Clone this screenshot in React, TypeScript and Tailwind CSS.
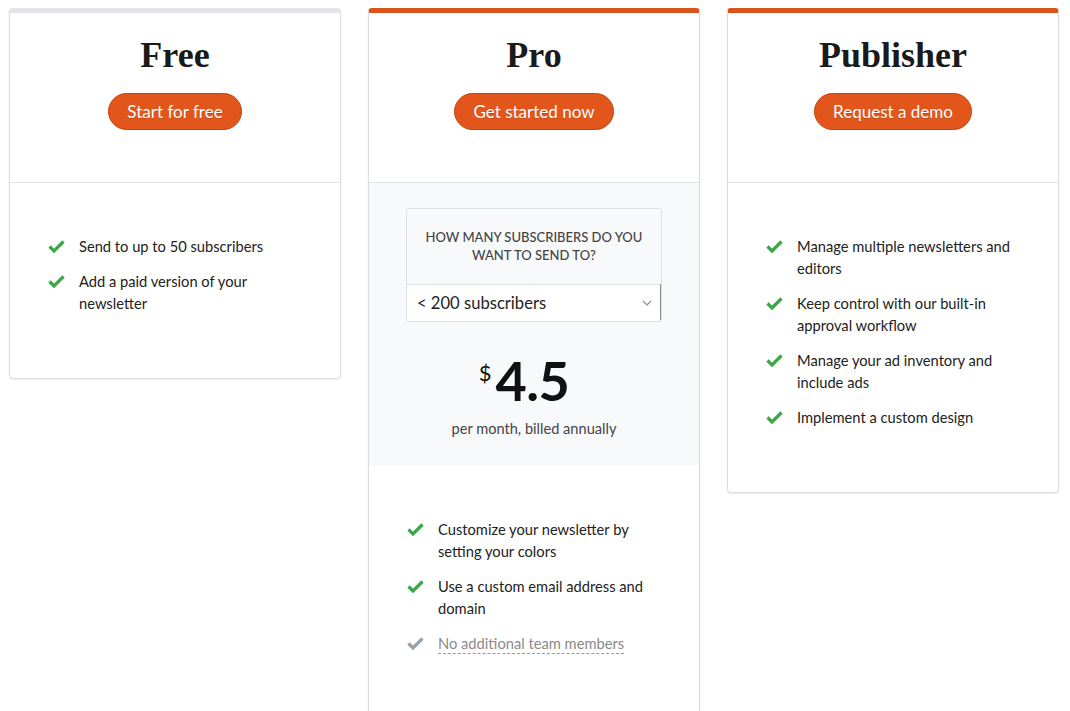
import React from 'react';

type Feature = { text: string; muted?: boolean };

interface Plan {
  name: string;
  cta: string;
  topBar: string;
  features: Feature[];
  pricing?: boolean;
}

const plans: Plan[] = [
  {
    name: 'Free',
    cta: 'Start for free',
    topBar: 'border-t-[#e2e4e8]',
    features: [
      { text: 'Send to up to 50 subscribers' },
      { text: 'Add a paid version of your newsletter' },
    ],
  },
  {
    name: 'Pro',
    cta: 'Get started now',
    topBar: 'border-t-[#d9531a]',
    pricing: true,
    features: [
      { text: 'Customize your newsletter by setting your colors' },
      { text: 'Use a custom email address and domain' },
      { text: 'No additional team members', muted: true },
    ],
  },
  {
    name: 'Publisher',
    cta: 'Request a demo',
    topBar: 'border-t-[#d9531a]',
    features: [
      { text: 'Manage multiple newsletters and editors' },
      { text: 'Keep control with our built-in approval workflow' },
      { text: 'Manage your ad inventory and include ads' },
      { text: 'Implement a custom design' },
    ],
  },
];

function Check({ muted }: { muted?: boolean }) {
  return (
    <svg width="17" height="13" viewBox="0 0 17 13" className="shrink-0 mt-[5px]">
      <path
        d="M1.5 6.5 L6 11 L15.5 1.5"
        fill="none"
        stroke={muted ? '#9aa0a8' : '#3aa845'}
        strokeWidth="3.2"
      />
    </svg>
  );
}

function Pricing() {
  return (
    <div className="bg-[#f8f9fb] pt-[25px] pb-[27px] flex flex-col items-center">
      <div className="w-[256px] border border-[#dcdfe3] rounded-[3px] overflow-hidden">
        <div className="pt-[19px] pb-[20px] px-4 text-center text-[13px] leading-[18px] font-medium uppercase text-[#444]">
          How many subscribers do you want to send to?
        </div>
        <div className="h-[37px] bg-white border-t border-[#dcdfe3] border-r border-r-[#8a8a8a] flex items-center justify-between pl-[10px] pr-[8px]">
          <span className="text-[16.6px] leading-none text-[#222]">&lt; 200 subscribers</span>
          <svg width="10" height="6" viewBox="0 0 10 6">
            <path d="M1 1 L5 5 L9 1" fill="none" stroke="#8a8a8a" strokeWidth="1.2" />
          </svg>
        </div>
      </div>
      <div className="mt-[32px] flex items-start pr-[20px] text-[#111]">
        <span className="text-[22px] leading-none mt-[8px] mr-[4px]">$</span>
        <span className="text-[54px] leading-none font-bold tracking-[-0.5px]">4.5</span>
      </div>
      <div className="mt-[11px] text-[14.6px] leading-[20px] text-[#444]">per month, billed annually</div>
    </div>
  );
}

function PlanCard({ plan }: { plan: Plan }) {
  return (
    <div
      className={`w-[332px] shrink-0 bg-white border border-[#dadcdf] border-t-[5px] ${plan.topBar} rounded-[4px] shadow-[0_1px_2px_rgba(0,0,0,0.08)]`}
    >
      <div className="flex flex-col items-center pt-[20px] pb-[52px] border-b border-[#e1e3e6]">
        <h2 className="text-[36px] leading-[44px] font-bold text-[#1a1a1a] font-['Liberation_Serif',serif]">
          {plan.name}
        </h2>
        <button className="mt-[16px] h-[37px] px-[18px] rounded-full bg-[#e2561b] border border-[#c24510] text-white text-[17px] leading-none [text-shadow:0_1px_0_rgba(0,0,0,0.15)]">
          {plan.cta}
        </button>
      </div>
      {plan.pricing && <Pricing />}
      <ul className="pt-[52px] pb-[64px] pl-[38px] flex flex-col gap-[13px]">
        {plan.features.map((f) => (
          <li key={f.text} className="flex gap-[14px]">
            <Check muted={f.muted} />
            <span
              className={`w-[224px] text-[14.7px] leading-[22px] ${
                f.muted ? 'text-[#8a8a8a]' : 'text-[#222]'
              }`}
            >
              {f.muted ? (
                <span className="underline decoration-dashed decoration-[#9a9a9a] underline-offset-[4px] decoration-1">
                  {f.text}
                </span>
              ) : (
                f.text
              )}
            </span>
          </li>
        ))}
      </ul>
    </div>
  );
}

export default function App() {
  return (
    <div className="h-[711px] overflow-hidden bg-white font-['Lato','Liberation_Sans',sans-serif]">
      <div className="flex items-start gap-[27px] pl-[9px] pt-[8px]">
        {plans.map((p) => (
          <PlanCard key={p.name} plan={p} />
        ))}
      </div>
    </div>
  );
}
